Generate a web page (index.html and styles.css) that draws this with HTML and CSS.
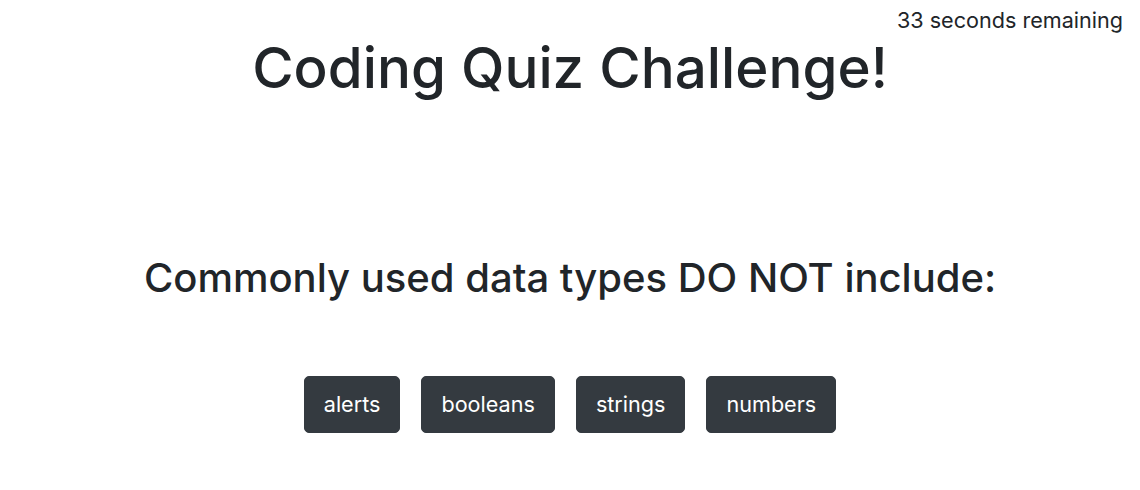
FILE: index.html
```html
<!DOCTYPE html>
<html lang="en">
<head>
<meta charset="utf-8">
<title>Coding Quiz Challenge</title>
<link rel="stylesheet" href="styles.css">
</head>
<body>
<header class="topbar">
  <span class="timer">33 seconds remaining</span>
</header>
<main class="quiz">
  <h1 class="title">Coding Quiz Challenge!</h1>
  <h2 class="question">Commonly used data types DO NOT include:</h2>
  <div class="answers">
    <button class="btn">alerts</button>
    <button class="btn">booleans</button>
    <button class="btn">strings</button>
    <button class="btn">numbers</button>
  </div>
</main>
</body>
</html>
```

FILE: styles.css
```css
* { box-sizing: border-box; }
html, body {
  margin: 0;
  padding: 0;
  background: #fff;
  color: #212529;
  font-family: Inter, "Noto Sans", sans-serif;
}
.topbar {
  display: flex;
  justify-content: flex-end;
  padding: 5px 17px 0 0;
  height: 34px;
}
.timer {
  font-size: 21.6px;
  line-height: 30px;
}
.quiz {
  display: flex;
  flex-direction: column;
  align-items: center;
}
.title {
  margin: 0;
  font-size: 56.5px;
  font-weight: 500;
  line-height: 1.2;
}
.question {
  margin: 152px 0 0;
  font-size: 40px;
  font-weight: 500;
  line-height: 48px;
}
.answers {
  display: flex;
  gap: 21px;
  margin-top: 74px;
}
.btn {
  font-family: inherit;
  font-size: 21.6px;
  line-height: 33px;
  color: #fff;
  background: #343a40;
  border: 1px solid #343a40;
  border-radius: 5px;
  padding: 11px 19px;
  cursor: pointer;
}
```
